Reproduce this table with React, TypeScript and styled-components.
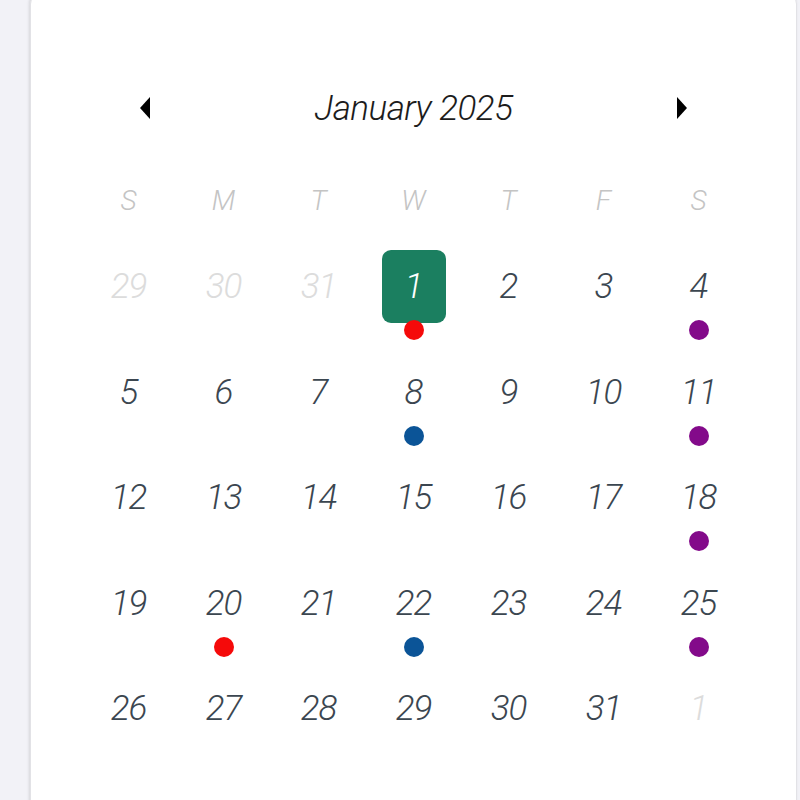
import React from 'react';
import styled, { createGlobalStyle } from 'styled-components';

const GlobalStyle = createGlobalStyle`
  html, body {
    margin: 0;
    padding: 0;
    background: #f2f2f7;
  }
  body {
    font-family: Roboto, "DejaVu Sans Condensed", "Liberation Sans", sans-serif;
    font-weight: 300;
  }
`;

const Page = styled.div`
  height: 800px;
  overflow: hidden;
  padding-left: 30px;
  padding-right: 3px;
`;

const Card = styled.div`
  margin-top: -12px;
  height: 830px;
  background: #fff;
  border-radius: 16px;
  border: 1px solid #e2e2e6;
  box-shadow: -1px 0 3px rgba(0, 0, 0, 0.12);
  padding-top: 94px;
  box-sizing: border-box;
`;

const Header = styled.div`
  display: flex;
  align-items: center;
  justify-content: space-between;
  height: 50px;
  padding: 0 108px 0 108px;
`;

const ArrowButton = styled.button`
  border: none;
  background: none;
  padding: 0;
  width: 12px;
  height: 24px;
  display: flex;
  align-items: center;
  justify-content: center;
  cursor: pointer;
`;

const Title = styled.div`
  font-size: 35px;
  font-style: italic;
  color: #1c1c1c;
  letter-spacing: -0.5px;
`;

const Grid = styled.div`
  display: grid;
  grid-template-columns: repeat(7, 95px);
  justify-content: center;
`;

const WeekRow = styled(Grid)`
  margin-top: 47px;
  height: 40px;
`;

const WeekLabel = styled.div`
  display: flex;
  align-items: center;
  justify-content: center;
  font-size: 28px;
  font-style: italic;
  color: #c4c4c4;
`;

const DaysGrid = styled(Grid)`
  margin-top: 30px;
  grid-auto-rows: 105.5px;
`;

const Cell = styled.div`
  display: flex;
  flex-direction: column;
  align-items: center;
`;

const DayBox = styled.div<{ $selected?: boolean; $muted?: boolean }>`
  width: 64px;
  height: 73px;
  border-radius: 9px;
  display: flex;
  align-items: center;
  justify-content: center;
  font-size: 35px;
  font-style: italic;
  letter-spacing: -1px;
  background: ${p => (p.$selected ? '#1b7f60' : 'transparent')};
  color: ${p => (p.$selected ? '#ffffff' : p.$muted ? '#dcdcdc' : '#3b4650')};
`;

const Dot = styled.span<{ $color: string }>`
  width: 20px;
  height: 20px;
  border-radius: 50%;
  margin-top: -3px;
  background: ${p => p.$color};
`;

const RED = '#f50a0a';
const BLUE = '#0b5497';
const PURPLE = '#830a8a';

type Day = { n: number; muted?: boolean; selected?: boolean; dot?: string };

const events: Record<number, string> = {
  1: RED,
  4: PURPLE,
  8: BLUE,
  11: PURPLE,
  18: PURPLE,
  20: RED,
  22: BLUE,
  25: PURPLE,
};

const days: Day[] = [
  { n: 29, muted: true },
  { n: 30, muted: true },
  { n: 31, muted: true },
  ...Array.from({ length: 31 }, (_, i) => ({
    n: i + 1,
    selected: i === 0,
    dot: events[i + 1],
  })),
  { n: 1, muted: true },
];

const weekdays = ['S', 'M', 'T', 'W', 'T', 'F', 'S'];

const Arrow: React.FC<{ dir: 'left' | 'right' }> = ({ dir }) => (
  <svg width="12" height="24" viewBox="0 0 12 24">
    {dir === 'left' ? (
      <path d="M11 1 L1 12 L11 23 Z" fill="#000" />
    ) : (
      <path d="M1 1 L11 12 L1 23 Z" fill="#000" />
    )}
  </svg>
);

const App: React.FC = () => {
  return (
    <>
      <GlobalStyle />
      <Page>
        <Card>
          <Header>
            <ArrowButton aria-label="Previous month">
              <Arrow dir="left" />
            </ArrowButton>
            <Title>January 2025</Title>
            <ArrowButton aria-label="Next month">
              <Arrow dir="right" />
            </ArrowButton>
          </Header>
          <WeekRow>
            {weekdays.map((d, i) => (
              <WeekLabel key={i}>{d}</WeekLabel>
            ))}
          </WeekRow>
          <DaysGrid>
            {days.map((d, i) => (
              <Cell key={i}>
                <DayBox $selected={d.selected} $muted={d.muted}>
                  {d.n}
                </DayBox>
                {d.dot && <Dot $color={d.dot} />}
              </Cell>
            ))}
          </DaysGrid>
        </Card>
      </Page>
    </>
  );
};

export default App;
